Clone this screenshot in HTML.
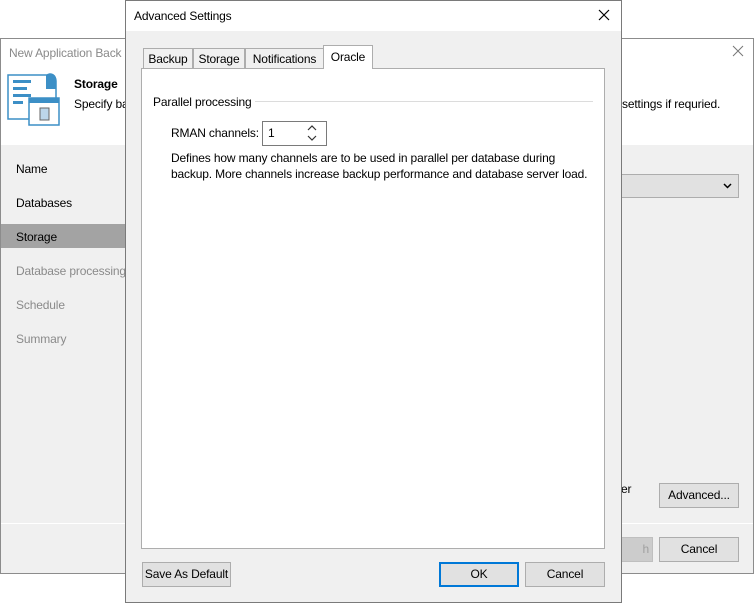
<!DOCTYPE html>
<html><head><style>
*{box-sizing:border-box;margin:0;padding:0}
body{width:754px;height:603px;background:#fff;position:relative;overflow:hidden;font-family:"Segoe UI","Liberation Sans",sans-serif;font-size:12px;letter-spacing:-0.15px;color:#000}
.a{position:absolute}
.btn{position:absolute;background:#e1e1e1;border:1px solid #adadad;text-align:center;line-height:22px;font-size:12px}
</style></head><body>
<div class="a" style="left:0;top:38px;width:754px;height:536px;border:1px solid #8c8c8c;background:#f0f0f0"></div>
<div class="a" style="left:1px;top:39px;width:752px;height:106px;background:#fff"></div>
<div class="a" style="left:9px;top:46px;color:#8a8a8a;font-size:12px">New Application Back</div>
<svg class="a" style="left:732px;top:45px" width="12" height="12"><path d="M1 1L11 11M11 1L1 11" stroke="#777" stroke-width="1"/></svg>
<svg class="a" style="left:6px;top:73px" width="54" height="54">
<path d="M2 2H44a6 6 0 0 1 6 6V46H2Z" fill="#fff" stroke="#3c8fc6" stroke-width="1.5"/>
<path d="M40 2a6 6 0 0 1 10 6v8H40Z" fill="#3c8fc6"/>
<rect x="7" y="7" width="18" height="3" fill="#3c8fc6"/><rect x="7" y="14" width="14" height="3" fill="#3c8fc6"/><rect x="7" y="21" width="18" height="3" fill="#3c8fc6"/><rect x="7" y="28" width="10" height="3" fill="#3c8fc6"/>
<rect x="23" y="25" width="30" height="27" fill="#fff" stroke="#3c8fc6" stroke-width="1.5"/><rect x="23" y="25" width="30" height="5" fill="#3c8fc6"/>
<rect x="34" y="35" width="9" height="12" fill="#bcd6ea" stroke="#666" stroke-width="1"/>
</svg>
<div class="a" style="left:74px;top:77px;font-weight:bold">Storage</div>
<div class="a" style="left:74px;top:97px">Specify ba</div>
<div class="a" style="left:622px;top:97px">settings if requried.</div>
<div class="a" style="left:16px;top:162px">Name</div>
<div class="a" style="left:16px;top:196px">Databases</div>
<div class="a" style="left:1px;top:224px;width:124px;height:24px;background:#a3a3a3"></div>
<div class="a" style="left:16px;top:230px">Storage</div>
<div class="a" style="left:16px;top:264px;color:#8a8a8a">Database processing</div>
<div class="a" style="left:16px;top:298px;color:#8a8a8a">Schedule</div>
<div class="a" style="left:16px;top:332px;color:#8a8a8a">Summary</div>
<div class="a" style="left:600px;top:174px;width:139px;height:24px;background:#e1e1e1;border:1px solid #adadad"></div>
<svg class="a" style="left:723px;top:183px" width="9" height="6"><path d="M1 1L4.5 4.5L8 1" fill="none" stroke="#000" stroke-width="1.5"/></svg>
<div class="a" style="left:621px;top:482px">er</div>
<div class="btn" style="left:659px;top:483px;width:80px;height:25px">Advanced...</div>
<div class="a" style="left:1px;top:523px;width:752px;height:1px;background:#fff"></div>
<div class="btn" style="left:600px;top:537px;width:53px;height:25px;background:#ccc;border-color:#bfbfbf;color:#a0a0a0;text-align:right;padding-right:3px">h</div>
<div class="btn" style="left:659px;top:537px;width:80px;height:25px">Cancel</div>
<div class="a" style="left:125px;top:0;width:497px;height:603px;border:1px solid #7a7a7a;background:#f0f0f0"></div>
<div class="a" style="left:126px;top:1px;width:495px;height:30px;background:#fff"></div>
<div class="a" style="left:134px;top:9px">Advanced Settings</div>
<svg class="a" style="left:598px;top:9px" width="12" height="12"><path d="M1 1L11 11M11 1L1 11" stroke="#000" stroke-width="1.2"/></svg>
<div class="a" style="left:141px;top:68px;width:464px;height:481px;background:#fff;border:1px solid #adadad"></div>
<div class="a" style="left:143px;top:48px;width:50px;height:21px;background:#f0f0f0;border:1px solid #adadad;text-align:center;line-height:20px">Backup</div>
<div class="a" style="left:193px;top:48px;width:52px;height:21px;background:#f0f0f0;border:1px solid #adadad;text-align:center;line-height:20px">Storage</div>
<div class="a" style="left:245px;top:48px;width:79px;height:21px;background:#f0f0f0;border:1px solid #adadad;text-align:center;line-height:20px">Notifications</div>
<div class="a" style="left:323px;top:45px;width:50px;height:24px;background:#fff;border:1px solid #adadad;border-bottom:none;text-align:center;line-height:23px">Oracle</div>
<div class="a" style="left:153px;top:95px">Parallel processing</div>
<div class="a" style="left:255px;top:101px;width:338px;height:1px;background:#dcdcdc"></div>
<div class="a" style="left:171px;top:126px">RMAN channels:</div>
<div class="a" style="left:262px;top:121px;width:65px;height:25px;border:1px solid #7a7a7a;background:#fff"></div>
<div class="a" style="left:268px;top:126px">1</div>
<svg class="a" style="left:306px;top:124px" width="12" height="18"><path d="M2 6L6 2L10 6M2 12L6 16L10 12" fill="none" stroke="#333" stroke-width="1.2"/></svg>
<div class="a" style="left:171px;top:150px;line-height:16px">Defines how many channels are to be used in parallel per database during<br>backup. More channels increase backup performance and database server load.</div>
<div class="btn" style="left:142px;top:562px;width:89px;height:25px">Save As Default</div>
<div class="btn" style="left:439px;top:562px;width:80px;height:25px;border:2px solid #0078d7;line-height:21px">OK</div>
<div class="btn" style="left:525px;top:562px;width:80px;height:25px">Cancel</div>
</body></html>
